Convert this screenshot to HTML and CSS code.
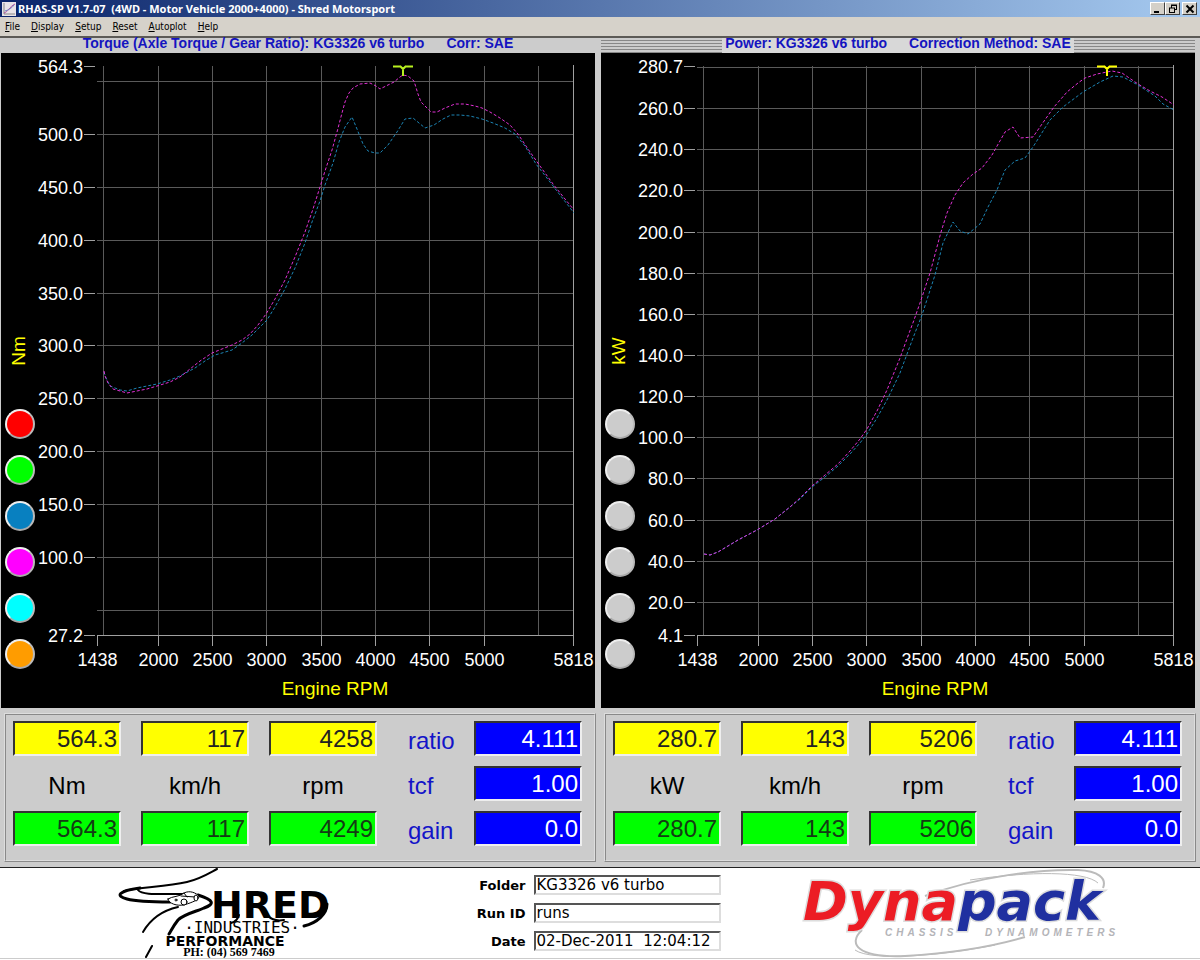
FILE: index.html
```html
<!DOCTYPE html>
<html lang="en">
<head>
    <meta charset="utf-8">
    <title>RHAS-SP V1.7-07</title>
    <link rel="stylesheet" href="styles.css">
</head>
<body>

<header class="titlebar">
    <svg class="app-icon" viewBox="0 0 14 14" width="14" height="14" aria-hidden="true">
        <rect width="14" height="14" fill="#e8e4e8"/>
        <path d="M2 1v11h11" fill="none" stroke="#888"/>
        <path d="M2 11C6 10 7 5 13 2" fill="none" stroke="#b050a0"/>
        <path d="M3 9C6 8 9 7 12 3" fill="none" stroke="#7080c0"/>
    </svg>
    <h1>RHAS-SP V1.7-07 &nbsp;(4WD - Motor Vehicle 2000+4000) - Shred Motorsport</h1>
    <div class="win-buttons">
        <button aria-label="Minimize"><svg viewBox="0 0 10 10" width="10" height="10"><path d="M1 8h5" stroke="#000" stroke-width="2"/></svg></button>
        <button aria-label="Restore"><svg viewBox="0 0 10 10" width="10" height="10"><path d="M3 1h6M3 1.5h6M3.5 1v3M8.500 1v5M6 5.500h3M1 4h6M1.500 4v5M6.500 4v5M1 8.500h6" fill="none" stroke="#000"/></svg></button>
        <button class="close" aria-label="Close"><svg viewBox="0 0 10 10" width="10" height="10"><path d="M1.500 1.500l7 7M8.500 1.500l-7 7" stroke="#000" stroke-width="2"/></svg></button>
    </div>
</header>

<nav class="menu">
    <a href="#"><u>F</u>ile</a>
    <a href="#"><u>D</u>isplay</a>
    <a href="#"><u>S</u>etup</a>
    <a href="#"><u>R</u>eset</a>
    <a href="#"><u>A</u>utoplot</a>
    <a href="#"><u>H</u>elp</a>
</nav>

<main class="panels">
    <section class="panel">
        <h2 class="heading"><span>Torque (Axle Torque / Gear Ratio): KG3326 v6 turbo</span><span>Corr: SAE</span></h2>
        <div class="chart">
            <svg id="torque" viewBox="1 53 594 655" role="img" aria-label="Torque"></svg>
            <div class="runs">
                <button class="red" aria-label="Run 1"></button>
                <button class="green" aria-label="Run 2"></button>
                <button class="blue" aria-label="Run 3"></button>
                <button class="magenta" aria-label="Run 4"></button>
                <button class="cyan" aria-label="Run 5"></button>
                <button class="orange" aria-label="Run 6"></button>
            </div>
        </div>
        <div class="readouts">
            <output class="cursor">564.3</output>
            <output class="cursor">117</output>
            <output class="cursor">4258</output>
            <label for="ratio1">ratio</label>
            <input id="ratio1" value="4.111">
            <span class="unit">Nm</span>
            <span class="unit">km/h</span>
            <span class="unit">rpm</span>
            <label for="tcf1">tcf</label>
            <input id="tcf1" value="1.00">
            <output class="peak">564.3</output>
            <output class="peak">117</output>
            <output class="peak">4249</output>
            <label for="gain1">gain</label>
            <input id="gain1" value="0.0">
        </div>
    </section>

    <section class="panel">
        <h2 class="heading striped"><span>Power: KG3326 v6 turbo</span><span>Correction Method: SAE</span></h2>
        <div class="chart">
            <svg id="power" viewBox="1 53 594 655" role="img" aria-label="Power"></svg>
            <div class="runs">
                <button aria-label="Run 1"></button>
                <button aria-label="Run 2"></button>
                <button aria-label="Run 3"></button>
                <button aria-label="Run 4"></button>
                <button aria-label="Run 5"></button>
                <button aria-label="Run 6"></button>
            </div>
        </div>
        <div class="readouts">
            <output class="cursor">280.7</output>
            <output class="cursor">143</output>
            <output class="cursor">5206</output>
            <label for="ratio2">ratio</label>
            <input id="ratio2" value="4.111">
            <span class="unit">kW</span>
            <span class="unit">km/h</span>
            <span class="unit">rpm</span>
            <label for="tcf2">tcf</label>
            <input id="tcf2" value="1.00">
            <output class="peak">280.7</output>
            <output class="peak">143</output>
            <output class="peak">5206</output>
            <label for="gain2">gain</label>
            <input id="gain2" value="0.0">
        </div>
    </section>
</main>

<footer class="footer">
    <svg class="shred" viewBox="115 868 220 90" width="220" height="90" role="img" aria-label="Shred Industries Performance">
        <g fill="none" stroke="#000" stroke-linecap="round">
            <path d="M217 869C206 875 200 879 187 882C165 887 140 887 124 891" stroke-width="2"/>
            <path d="M140 888C118 891 115 896 127 899C138 902 155 902 170 902" stroke-width="3"/>
            <path d="M138 890C142 895 155 894 188 894" stroke-width="2"/>
            <path d="M198 895C214 900 215 904 204 908C198 911 184 914 178 920C174 925 172 929 169 934" stroke-width="3"/>
            <path d="M178 907C160 911 150 920 143 932" stroke-width="2"/>
            <path d="M152 946L146 957" stroke-width="2"/>
            <path d="M168 899C172 896 180 897 184 893C190 890 196 893 199 896C199 900 193 902 184 905C177 906 169 904 168 899Z" fill="#fff"/>
            <path d="M181 896l14 1M184 893l3 4" />
            <ellipse cx="184" cy="902" rx="3" ry="3" fill="#fff"/>
            <ellipse cx="196" cy="898" rx="2" ry="3" fill="#fff"/>
            <circle cx="176" cy="900" r="1"/>
            <path d="M239 915C238 919 235 922 231 923" stroke-width="2"/>
            <path d="M268 916C272 920 278 921 284 920" stroke-width="2"/>
            <path d="M327 904C327 914 317 923 304 926" stroke-width="3"/>
        </g>
        <text x="211" y="918" class="shred-name">HRED</text>
        <text x="242" y="933" class="shred-industries">·INDUSTRIES·</text>
        <text x="225" y="946" class="shred-performance">PERFORMANCE</text>
        <text x="229" y="956" class="shred-phone">PH: (04) 569 7469</text>
    </svg>

    <form class="run-info">
        <label for="folder">Folder</label>
        <input id="folder" value="KG3326 v6 turbo">
        <label for="runid">Run ID</label>
        <input id="runid" value="runs">
        <label for="date">Date</label>
        <input id="date" value="02-Dec-2011  12:04:12">
    </form>

    <svg class="dynapack" viewBox="800 868 330 90" width="330" height="90" role="img" aria-label="Dynapack Chassis Dynamometers">
        <g fill="none" stroke="#bbb" stroke-width="2">
            <path d="M925 896C980 876 1040 869 1078 870C1098 871 1107 878 1103 888"/>
            <path d="M970 880C1030 871 1085 871 1098 883" stroke-width="1"/>
            <path d="M862 930C847 944 858 958 905 956C955 953 995 946 1025 937"/>
            <path d="M855 950C872 962 945 955 995 945" stroke-width="1"/>
        </g>
        <text x="803" y="920" class="dyna-name"><tspan class="dyna-red">Dyna</tspan><tspan class="dyna-blue">pack</tspan></text>
        <text x="885" y="936" class="dyna-sub">CHASSIS</text>
        <text x="985" y="936" class="dyna-sub">DYNAMOMETERS</text>
    </svg>
</footer>

<script src="chart.js"></script>
</body>
</html>
```

FILE: styles.css
```css
* {
    box-sizing: border-box;
}
body {
    margin: 0;
    background-color: #fff;
    font-family: "Liberation Sans", Arial, sans-serif;
}
.titlebar {
    display: flex;
    align-items: center;
    gap: 2px;
    height: 17px;
    padding: 0 3px 0 2px;
    background: linear-gradient(to right, #0a246a, #a6caf0);
}
.titlebar h1 {
    flex: 1;
    margin: 0;
    color: #fff;
    font-family: "Noto Sans", sans-serif;
    font-size: 11px;
    line-height: 17px;
    white-space: nowrap;
}
.win-buttons {
    display: flex;
}
.win-buttons button {
    display: flex;
    align-items: center;
    justify-content: center;
    width: 15px;
    height: 13px;
    padding: 0;
    background-color: #d4d0c8;
    border: 1px solid;
    border-color: #fff #404040 #404040 #fff;
}
.win-buttons .close {
    margin-left: 2px;
}
.menu {
    display: flex;
    gap: 11px;
    padding: 0 5px;
    background-color: #d6d2ca;
    border-bottom: 2px solid #5c5a56;
    font-family: "DejaVu Sans Condensed", "DejaVu Sans", sans-serif;
    font-size: 10px;
    line-height: 19px;
}
.menu a {
    color: #000;
    text-decoration: none;
}
.panels {
    display: grid;
    grid-template-columns: 1fr 1fr;
    background-color: #ccc;
    border-bottom: 1px solid #222;
}
.heading {
    display: flex;
    justify-content: center;
    height: 15px;
    margin: 0 5px 0 1px;
    color: #1414c0;
    font-size: 14px;
    line-height: 11px;
    white-space: nowrap;
}
.heading span {
    padding: 0 11px 0 3px;
    background-color: #ccc;
}
.heading span + span {
    padding: 0 3px 0 11px;
}
.striped {
    background: repeating-linear-gradient(to bottom, #ccc 0, #ccc 2px, #888 2px, #888 3px);
}
.striped span {
    background-color: #d8d8d8;
}
.chart {
    position: relative;
    margin: 0 5px 0 1px;
    background-color: #000;
}
.chart svg {
    display: block;
    width: 100%;
}
.chart text {
    font-size: 18px;
    fill: #fff;
}
.chart .title {
    font-size: 19px;
    fill: #ff0;
}
.grid {
    stroke: #5a5a5a;
}
.axis {
    stroke: #a0a0a0;
}
.curve {
    fill: none;
    stroke-dasharray: 3 2;
}
.run-blue {
    stroke: #1c84b4;
}
.run-magenta {
    stroke: #e030d4;
}
.marker {
    fill: none;
    stroke-width: 2;
}
.runs {
    position: absolute;
    bottom: 39px;
    left: 4px;
    display: flex;
    flex-direction: column;
    gap: 16px;
}
.runs button {
    width: 30px;
    height: 30px;
    padding: 0;
    border: 2px solid;
    border-color: #eee #bbb #aaa #eee;
    border-radius: 50%;
    background-color: #ccc;
}
.runs .red {
    background-color: #f00;
}
.runs .green {
    background-color: #0f0;
}
.runs .blue {
    background-color: #0880c0;
}
.runs .magenta {
    background-color: #f0f;
}
.runs .cyan {
    background-color: #0ff;
}
.runs .orange {
    background-color: #ff9c00;
}
.readouts {
    display: grid;
    grid-template-columns: 1fr 1fr 1fr 57px 1fr;
    grid-auto-rows: 35px;
    gap: 10px 20px;
    margin: 5px 4px 5px;
    padding: 6px 12px 14px 7px;
    border: 2px ridge #ddd;
    font-size: 24px;
    line-height: 32px;
}
.readouts output,
.readouts input {
    display: block;
    width: 100%;
    min-width: 0;
    padding: 0 2px;
    border: 2px solid;
    border-color: #333 #eee #eee #333;
    text-align: right;
}
.readouts input {
    background-color: #00f;
    color: #fff;
    font: inherit;
}
.readouts label {
    padding: 4px 0 0 11px;
    color: #1414c8;
}
.cursor {
    background-color: #ff0;
    color: #222;
}
.peak {
    background-color: #0f0;
    color: #143c14;
}
.unit {
    padding-top: 4px;
    text-align: center;
}
.footer {
    display: grid;
    grid-template-columns: 1fr auto 1fr;
    align-items: center;
    background-color: #fff;
    border-bottom: 1px solid #ccc;
}
.shred {
    margin-left: 115px;
}
.dynapack {
    margin-left: 73px;
}
.run-info {
    display: grid;
    grid-template-columns: 52px 187px;
    gap: 8px;
    align-items: center;
    padding-right: 6px;
    font-family: "DejaVu Sans", sans-serif;
    font-size: 13px;
}
.run-info label {
    text-align: right;
    font-weight: bold;
    white-space: nowrap;
}
.run-info input {
    width: 100%;
    height: 20px;
    padding: 0 1px;
    border: 2px solid;
    border-color: #555 #ddd #ddd #555;
    font: inherit;
    font-size: 15px;
    white-space: pre;
}
.shred-name {
    font: bold 38px "DejaVu Sans", sans-serif;
}
.shred-industries {
    font: 16px "DejaVu Sans Mono", monospace;
    text-anchor: middle;
}
.shred-performance {
    font: bold 14px "DejaVu Sans", sans-serif;
    text-anchor: middle;
}
.shred-phone {
    font: bold 12px "Liberation Serif", serif;
    text-anchor: middle;
}
.dyna-name {
    font: italic bold 54px "DejaVu Sans", sans-serif;
    stroke: #ddd;
    stroke-width: 3px;
    paint-order: stroke;
}
.dyna-red {
    fill: #ec1c24;
}
.dyna-blue {
    fill: #2030a0;
}
.dyna-sub {
    font: italic bold 10px "Liberation Sans", sans-serif;
    letter-spacing: 4px;
    fill: #b4b4b8;
}
```

FILE: chart.js
```js
const LEFT = 97, RIGHT = 573, TOP = 66, BOTTOM = 635;
const RPM_MIN = 1438, RPM_MAX = 5818;

function xPos(rpm) {
    return Math.floor(LEFT + (rpm - RPM_MIN) / (RPM_MAX - RPM_MIN) * (RIGHT - LEFT)) + 0.5;
}

function line(x1, y1, x2, y2, cls) {
    return `<path class="${cls}" d="M${x1} ${y1}L${x2} ${y2}"/>`;
}

function drawChart(id, o) {
    const yPos = v => Math.floor(BOTTOM - (v - o.min) / (o.max - o.min) * (BOTTOM - TOP)) + 0.5;
    let out = '';

    // grid
    for (let rpm = 1500; rpm <= 5500; rpm += 500) {
        out += line(xPos(rpm), TOP, xPos(rpm), BOTTOM, 'grid');
    }
    for (let v = o.step; v < o.max; v += o.step) {
        out += line(LEFT, yPos(v), RIGHT, yPos(v), 'grid');
    }
    out += line(LEFT, BOTTOM + 0.5, RIGHT + 1, BOTTOM + 0.5, 'axis');
    out += line(RIGHT + 0.5, TOP - 1, RIGHT + 0.5, BOTTOM, 'axis');

    // labels
    [1438, 2000, 2500, 3000, 3500, 4000, 4500, 5000, 5818].forEach(rpm => {
        out += line(xPos(rpm), BOTTOM, xPos(rpm), BOTTOM + 11, 'axis');
        out += `<text x="${xPos(rpm)}" y="666" text-anchor="middle">${rpm}</text>`;
    });
    const values = [o.min, o.max];
    for (let v = o.first; v <= o.last; v += o.step) {
        values.push(v);
    }
    values.forEach(v => {
        out += line(84, yPos(v), 95, yPos(v), 'axis');
        out += `<text x="83" y="${yPos(v) + 6}" text-anchor="end">${v.toFixed(1)}</text>`;
    });
    out += '<text class="title" x="335" y="695" text-anchor="middle">Engine RPM</text>';
    out += `<text class="title" transform="translate(25 351) rotate(-90)" text-anchor="middle">${o.unit}</text>`;

    // runs
    out += `<polyline class="curve run-blue" points="${o.blue}"/>`;
    out += `<polyline class="curve run-magenta" points="${o.magenta}"/>`;
    out += `<path class="marker" stroke="${o.markerColor}" d="M${o.marker - 10} 66.500h8M${o.marker + 2} 66.500h8M${o.marker - 3} 66l3 3l3 -3M${o.marker} 68v8"/>`;

    document.getElementById(id).innerHTML = out;
}

drawChart('torque', {
    unit: 'Nm', min: 27.2, max: 564.3, step: 50, first: 100, last: 500,
    marker: 403, markerColor: '#b8f020',
    magenta: '104,371 105,376 108,383 113,389 120,391 127,393 137,391 147,389 157,386 170,382 180,377 190,369 200,361 212,353 222,349 232,345 242,340 250,334 258,325 266,314 275,299 285,280 295,257 305,232 313,209 320,187 325,171 332,150 337,132 342,113 345,102 349,93 353,88 360,84 370,83 376,86 380,89 386,86 394,82 400,77 403,75 408,76 414,81 418,94 421,102 425,106 431,112 437,112 445,108 455,104 465,104 475,106 482,108 490,112 500,118 510,125 518,134 528,149 540,166 553,184 565,199 574,210',
    blue: '104,372 106,378 110,386 115,388 120,390 127,391 137,388 147,386 157,384 170,380 180,376 195,368 205,361 215,355 222,353 232,350 242,343 252,335 262,325 267,320 275,307 285,289 295,268 305,243 312,222 320,201 325,185 333,163 339,142 345,127 352,117 357,129 363,144 368,151 375,153 380,153 388,145 397,132 405,119 413,118 419,123 425,128 434,125 443,119 451,115 460,115 470,116 482,119 493,123 505,128 515,134 525,146 536,164 550,182 560,195 574,213'
});

drawChart('power', {
    unit: 'kW', min: 4.1, max: 280.7, step: 20, first: 20, last: 260,
    marker: 507, markerColor: '#ff0',
    magenta: '104,554 110,555 118,552 128,546 138,540 157,530 175,519 190,507 200,498 212,486 225,475 238,464 250,451 260,439 267,429 277,411 287,390 300,358 308,336 314,320 320,303 330,273 341,232 347,213 355,195 363,183 373,174 382,168 392,155 405,132 413,127 420,138 433,137 442,124 454,107 467,92 478,83 485,78 497,74 512,71 522,73 538,84 550,91 562,97 574,105',
    blue: '104,554 110,555 118,552 128,546 138,540 157,530 175,519 190,507 200,499 212,487 225,477 238,466 250,454 260,443 267,434 277,418 287,400 300,373 313,338 322,315 335,275 343,243 353,222 360,231 368,234 380,224 388,207 397,190 405,170 415,161 425,158 433,147 450,120 463,107 483,92 500,82 513,76 523,77 538,85 555,96 563,104 574,110'
});
```
